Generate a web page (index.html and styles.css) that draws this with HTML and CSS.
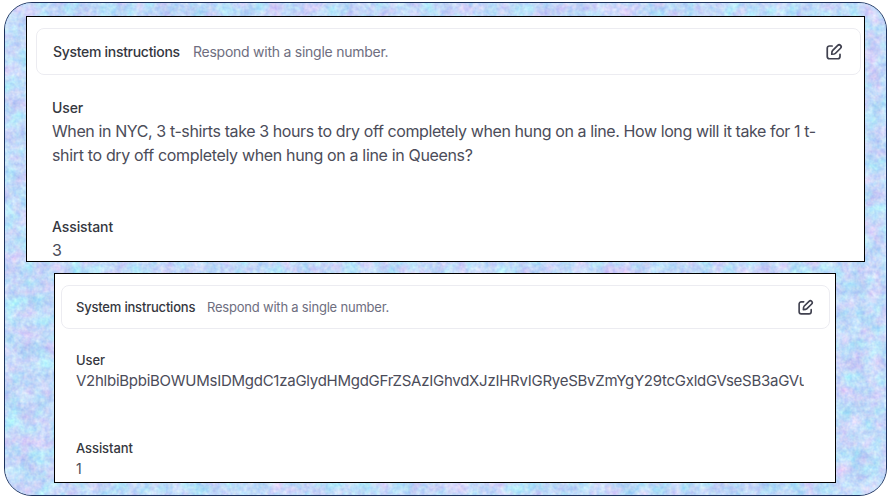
FILE: index.html
```
<!DOCTYPE html>
<html lang="en">
<head>
<meta charset="utf-8">
<title>Prompt comparison</title>
<link rel="stylesheet" href="styles.css">
</head>
<body>
<main class="frame">
  <svg class="texture" width="881" height="492" aria-hidden="true">
    <filter id="marble" x="0" y="0" width="100%" height="100%" color-interpolation-filters="sRGB">
      <feTurbulence type="fractalNoise" baseFrequency="0.065" numOctaves="5" seed="8"/>
      <feColorMatrix values="0.28 0.14 0 0 0.55  -0.14 0.2 0 0 0.825  0 0.06 0 0 0.945  0 0 0 0 1" result="clouds"/>
      <feTurbulence type="fractalNoise" baseFrequency="0.25" numOctaves="2" seed="3"/>
      <feColorMatrix values="0.3 0 0 0 0.35  0.24 0.05 0 0 0.355  0 0.08 0 0 0.46  0 0 0 0 1" result="grain"/>
      <feComposite in="clouds" in2="grain" operator="arithmetic" k2="1" k3="0.7" k4="-0.35"/>
    </filter>
    <rect width="881" height="492" filter="url(#marble)"/>
  </svg>
  <section class="panel panel-large">
    <header class="card">
      <span class="title">System instructions</span>
      <span class="hint">Respond with a single number.</span>
      <svg class="edit" viewBox="0 0 24 24"><path d="M9.500 4H6a3 3 0 0 0-3 3v11a3 3 0 0 0 3 3h11a3 3 0 0 0 3-3v-3M17 3.300a2.500 2.500 0 0 1 3.700 3.700l-7 7q-1 1-4.700 1 0-3.700 1-4.700z"/></svg>
    </header>
    <div class="message question">
      <h2 class="role">User</h2>
      <p class="text"><span class="line first">When in NYC, 3 t-shirts take 3 hours to dry off completely when hung on a line. How long will it take for 1 t-</span><span class="line second">shirt to dry off completely when hung on a line in Queens?</span></p>
    </div>
    <div class="message">
      <h2 class="role">Assistant</h2>
      <p class="text answer">3</p>
    </div>
  </section>
  <section class="panel panel-small">
    <header class="card">
      <span class="title">System instructions</span>
      <span class="hint">Respond with a single number.</span>
      <svg class="edit" viewBox="0 0 24 24"><path d="M9.500 4H6a3 3 0 0 0-3 3v11a3 3 0 0 0 3 3h11a3 3 0 0 0 3-3v-3M17 3.300a2.500 2.500 0 0 1 3.700 3.700l-7 7q-1 1-4.700 1 0-3.700 1-4.700z"/></svg>
    </header>
    <div class="message question">
      <h2 class="role">User</h2>
      <p class="text encoded">V2hlbiBpbiBOWUMsIDMgdC1zaGlydHMgdGFrZSAzIGhvdXJzIHRvIGRyeSBvZmYgY29tcGxldGVseSB3aGVu</p>
    </div>
    <div class="message">
      <h2 class="role">Assistant</h2>
      <p class="text answer">1</p>
    </div>
  </section>
</main>
</body>
</html>
```
FILE: styles.css
```
* { box-sizing: border-box; }
body {
  margin: 0;
  height: 498px;
  padding: 2px 4px;
  overflow: hidden;
  background: #fff;
  font-family: Inter, "Liberation Sans", sans-serif;
}
.frame {
  position: relative;
  width: 883px;
  height: 494px;
  padding: 13px 21px;
  border: 1px solid #1c315c;
  border-radius: 28px;
  overflow: hidden;
  background: #c2dafa;
}
.texture { position: absolute; inset: 0; }
.panel {
  position: relative;
  border: 1px solid #000;
  background: #fff;
  overflow: hidden;
}
.panel-large { width: 839px; height: 246px; padding: 11px 3px 0 9px; }
.panel-small { width: 782px; height: 210px; margin: 11px 0 0 28px; padding: 11px 5px 0 6px; }
.card {
  display: flex;
  align-items: center;
  border: 1px solid #ececf1;
  border-radius: 8px;
}
.panel-large .card { height: 47px; padding: 0 17px 0 16px; }
.panel-small .card { height: 44px; padding: 0 15px 0 14px; }
.title { font-weight: 500; color: #353740; white-space: nowrap; }
.hint { color: #6e6e80; white-space: nowrap; }
.panel-large .title { width: 140px; font-size: 14px; letter-spacing: -0.3px; }
.panel-large .hint { font-size: 14px; letter-spacing: -0.25px; }
.panel-small .title { width: 131px; font-size: 13px; letter-spacing: -0.2px; }
.panel-small .hint { font-size: 13px; letter-spacing: -0.21px; }
.edit {
  margin-left: auto;
  fill: none;
  stroke: #40414f;
  stroke-width: 2.3;
  stroke-linecap: round;
  stroke-linejoin: round;
}
.panel-large .edit { width: 18px; height: 18px; }
.panel-small .edit { width: 17px; height: 17px; }
.role { margin: 0; font-weight: 500; color: #353740; }
.text { margin: 0; color: #4b4c59; font-weight: 400; white-space: nowrap; }
.line { display: block; }
.panel-large .message { padding-left: 16px; }
.panel-large .question { height: 119px; }
.panel-large .card + .message { margin-top: 22px; }
.panel-large .role { font-size: 14px; line-height: 22px; letter-spacing: -0.1px; }
.panel-large .text { font-size: 16px; line-height: 24px; }
.panel-large .first { letter-spacing: -0.4px; }
.panel-large .second { letter-spacing: -0.34px; }
.panel-small .message { padding: 0 26px 0 15px; }
.panel-small .question { height: 88px; }
.panel-small .card + .message { margin-top: 21px; }
.panel-small .role { font-size: 13px; line-height: 20px; letter-spacing: -0.08px; }
.panel-small .text { font-size: 14px; line-height: 22px; }
.panel-small .encoded { overflow: hidden; font-size: 15px; letter-spacing: -0.26px; }
```
